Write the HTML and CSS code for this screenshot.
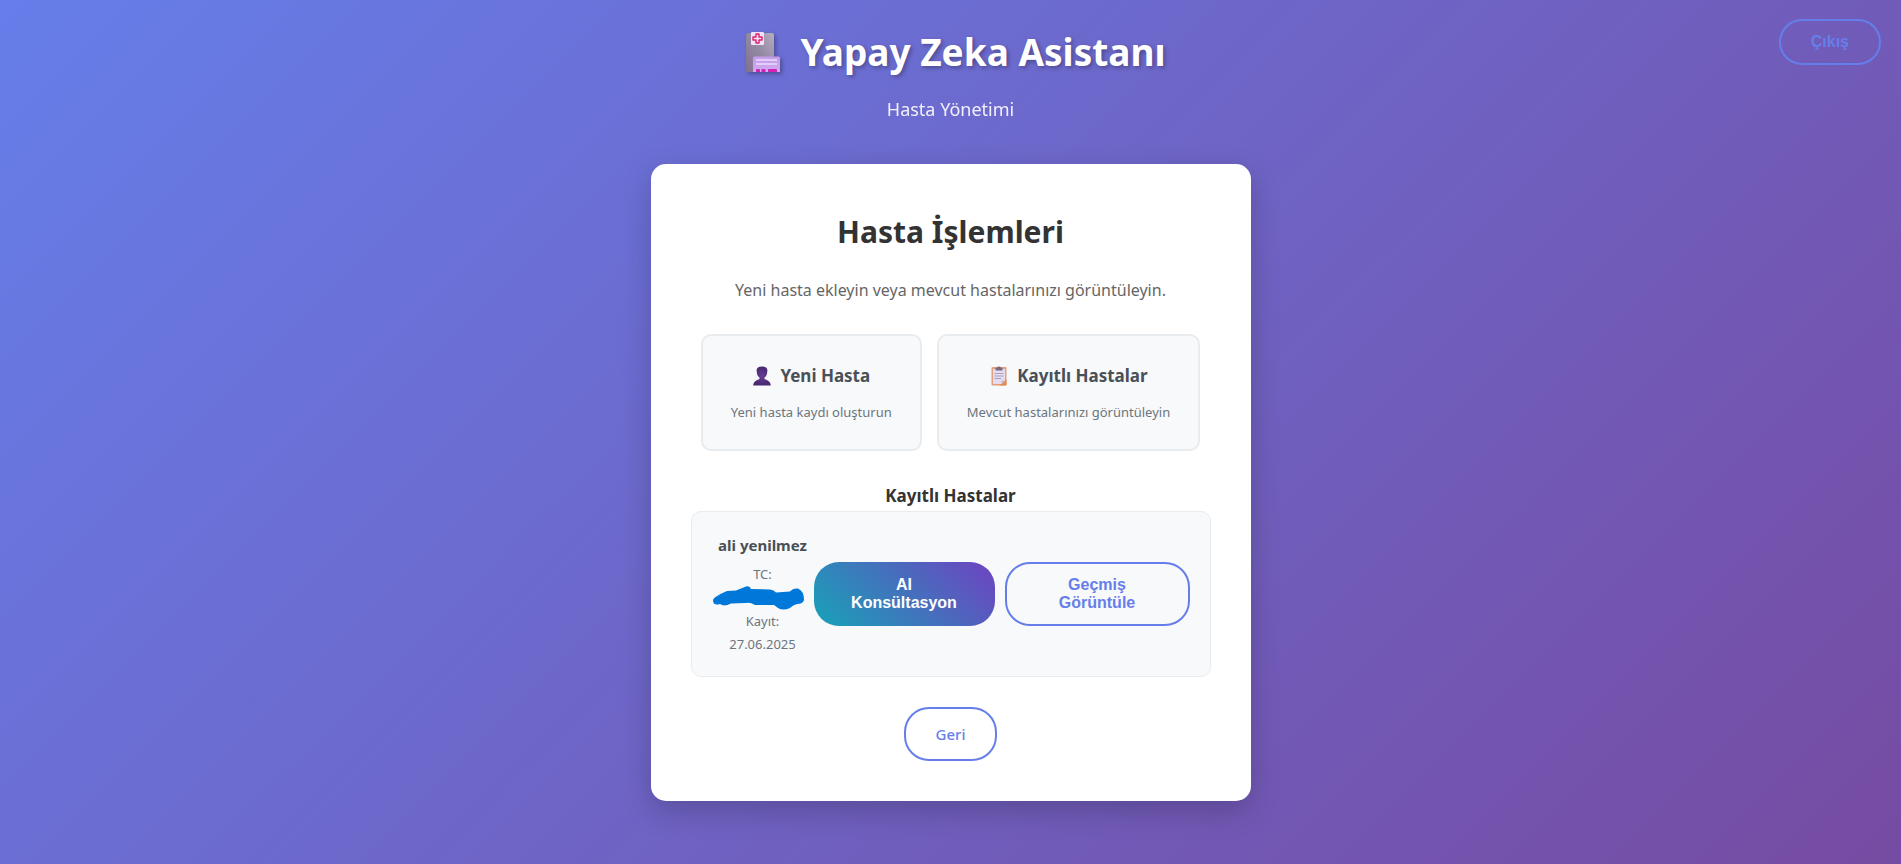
FILE: index.html
```html
<!DOCTYPE html>
<html lang="tr">
<head>
<meta charset="utf-8">
<meta name="viewport" content="width=device-width, initial-scale=1">
<title>Yapay Zeka Asistanı</title>
<link rel="stylesheet" href="styles.css">
</head>
<body>
<button type="button" class="btn btn-outline logout">Çıkış</button>
<header class="header">
  <h1 class="title">
    <svg class="title-icon" viewBox="0 0 36 42" aria-hidden="true">
      <defs>
        <linearGradient id="tower" x1="0" y1="1" x2="1" y2="0"><stop offset="0" stop-color="#80708e"/><stop offset=".5" stop-color="#9388a2"/><stop offset="1" stop-color="#b6adc0"/></linearGradient>
        <linearGradient id="wing" x1="0" y1="0" x2="0" y2="1"><stop offset="0" stop-color="#c49be8"/><stop offset="1" stop-color="#cfabf2"/></linearGradient>
      </defs>
      <path d="M1 4Q1 2 3 2H27Q29 2 29 4V41H1Z" fill="url(#tower)"/>
      <rect x="6" y="1" width="13" height="13" rx="1" fill="#eee2fb"/>
      <path d="M11 3h3v3h3v3h-3v3h-3v-3h-3v-3h3Z" fill="none" stroke="#e01f62" stroke-width="1.400" stroke-linejoin="round"/>
      <path d="M8 27Q8 25.500 9.500 25.500H33.500Q35 25.500 35 27V41H8Z" fill="url(#wing)"/>
      <path d="M11 29H32M11 33H32" stroke="#ecdcff" stroke-width="1.500"/>
      <path d="M11 41V39Q11 38 12 38H14Q15 38 15 39V41ZM16.500 41V39Q16.500 38 17.500 38H19.500Q20.500 38 20.500 39V41ZM23 41V39Q23 38 24 38H31Q32 38 32 39V41Z" fill="#d323b3"/>
    </svg>
    <span>Yapay Zeka Asistanı</span>
  </h1>
  <p class="subtitle">Hasta Yönetimi</p>
</header>
<main class="card">
  <h2 class="card-title">Hasta İşlemleri</h2>
  <p class="lead">Yeni hasta ekleyin veya mevcut hastalarınızı görüntüleyin.</p>
  <div class="options">
    <button type="button" class="option">
      <span class="option-title">
        <svg class="option-icon" viewBox="0 0 20 20" aria-hidden="true">
          <defs><radialGradient id="bust"><stop offset="0" stop-color="#653c96"/><stop offset="1" stop-color="#482870"/></radialGradient></defs>
          <path d="M10 .5C13.500.5 15.500 2 15.400 4.500L15 7.500C14.700 9.500 13.500 11 12.500 11.500V13C15.500 14 18.500 15.500 18.800 19.500H1.200C1.500 15.500 4.500 14 7.500 13V11.500C6.500 11 5.300 9.500 5 7.500L4.600 4.500C4.500 2 6.500.5 10 .5Z" fill="url(#bust)"/>
        </svg>
        <span>Yeni Hasta</span>
      </span>
      <span class="option-text">Yeni hasta kaydı oluşturun</span>
    </button>
    <button type="button" class="option">
      <span class="option-title">
        <svg class="option-icon" viewBox="0 0 20 20" aria-hidden="true">
          <rect x="2.500" y="1" width="15" height="18.500" rx="1" fill="#e3a07f"/>
          <path d="M17.500 13V18.500Q17.500 19.500 16.500 19.500H10Z" fill="#e68b50"/>
          <path d="M4 3H16V14.500L12.500 18H4Z" fill="#e5dcf2"/>
          <path d="M12.500 18V14.500H16Z" fill="#c5b5dc"/>
          <path d="M6.500 2Q6.500 1.500 8 1.500Q8.500.5 10 .5T12 1.500Q13.500 1.500 13.500 2V4.500H6.500Z" fill="#766b80"/>
          <path d="M5.500 7.500H14.500M5.500 10H14.500M5.500 12.500H12" stroke="#aaa2b6"/>
        </svg>
        <span>Kayıtlı Hastalar</span>
      </span>
      <span class="option-text">Mevcut hastalarınızı görüntüleyin</span>
    </button>
  </div>
  <section class="patients">
    <h3 class="patients-title">Kayıtlı Hastalar</h3>
    <article class="patient">
      <div class="patient-info">
        <h4 class="patient-name">ali yenilmez</h4>
        <p class="patient-meta">TC:</p>
        <svg class="redaction" viewBox="0 0 92 24" aria-hidden="true">
          <path d="M1 14C3 10 9 8 15 5L24 4.500L34 .5Q38-.5 39 3L58 3.500Q62 4 64 6.500L78 5.500Q81 2 86 2.500Q92 5 92 14Q91 18 85 18Q81 19 78 22Q71 25 66 22L62 19L43 19Q38 16 34 17L19 17.500Q12 21 8 18Q1 20 1 14Z" fill="#0078d9"/>
        </svg>
        <p class="patient-meta">Kayıt:<br>27.06.2025</p>
      </div>
      <div class="patient-actions">
        <button type="button" class="btn btn-ai">AI<br>Konsültasyon</button>
        <button type="button" class="btn btn-outline">Geçmiş<br>Görüntüle</button>
      </div>
    </article>
  </section>
  <a href="#" class="back">Geri</a>
</main>
</body>
</html>
```
FILE: styles.css
```css
* {
  box-sizing: border-box;
  margin: 0;
  padding: 0;
}

body {
  min-height: 100vh;
  padding: 20px;
  font-family: "Segoe UI", "Noto Sans", "Open Sans", sans-serif;
  color: #333;
  text-align: center;
  background: linear-gradient(135deg, #667eea 0%, #764ba2 100%);
}

.header {
  margin-bottom: 40px;
  color: #fff;
}

.title {
  display: flex;
  justify-content: center;
  align-items: center;
  gap: 19px;
  padding-left: 10px;
  font-size: 37px;
  line-height: 64px;
  text-shadow: 2px 2px 4px rgba(0, 0, 0, 0.3);
}

.title-icon {
  width: 36px;
  height: 42px;
  filter: drop-shadow(2px 2px 2px rgba(0, 0, 0, 0.3));
}

.subtitle {
  margin-top: 10px;
  font-size: 18px;
  line-height: 30px;
  opacity: 0.9;
}

.btn {
  padding: 12px 30px;
  border: 2px solid transparent;
  border-radius: 25px;
  font: bold 16px/18px "Liberation Sans", Arial, sans-serif;
  cursor: pointer;
}

.btn-outline {
  border-color: #667eea;
  color: #667eea;
  background: transparent;
}

.btn-ai {
  border: 0;
  color: #fff;
  background: linear-gradient(45deg, #17a2b8, #6f42c1);
}

.logout {
  position: absolute;
  top: 19px;
  right: 20px;
  min-height: 46px;
}

.card {
  max-width: 600px;
  margin: 0 auto;
  padding: 40px;
  border-radius: 15px;
  background: #fff;
  box-shadow: 0 10px 30px rgba(0, 0, 0, 0.2);
}

.card-title {
  font-size: 30px;
  line-height: 56px;
}

.lead {
  margin-top: 16px;
  font-size: 16px;
  line-height: 28px;
  color: #666;
}

.options {
  display: flex;
  justify-content: center;
  gap: 15px;
  margin-top: 30px;
}

.option {
  padding: 25px 28px;
  border: 2px solid #e9ecef;
  border-radius: 10px;
  font-family: inherit;
  background: #f8f9fa;
  cursor: pointer;
}

.option-title {
  display: flex;
  justify-content: center;
  align-items: center;
  gap: 8px;
  margin-bottom: 10px;
  font-size: 17px;
  font-weight: bold;
  line-height: 30px;
  color: #495057;
}

.option-icon {
  width: 20px;
  height: 20px;
}

.option-text {
  display: block;
  font-size: 13px;
  line-height: 23px;
  color: #6c757d;
}

.patients {
  margin-top: 30px;
}

.patients-title {
  font-size: 17px;
  line-height: 30px;
}

.patient {
  display: flex;
  align-items: center;
  padding: 20px;
  border: 1px solid #e9ecef;
  border-radius: 10px;
  background: #f8f9fa;
}

.patient-info {
  flex: 0 0 102px;
}

.patient-name {
  margin-bottom: 5px;
  font-size: 15px;
  line-height: 26px;
  color: #495057;
}

.patient-meta {
  font-size: 13px;
  line-height: 23px;
  color: #6c757d;
}

.redaction {
  display: block;
  width: 92px;
  height: 24px;
}

.patient-actions {
  display: flex;
  flex: 1;
  gap: 10px;
}

.patient-actions .btn {
  flex: 1;
  min-height: 64px;
}

.back {
  display: inline-block;
  margin-top: 30px;
  padding: 12px 30px;
  border: 2px solid #667eea;
  border-radius: 25px;
  font-size: 15px;
  font-weight: 500;
  line-height: 26px;
  color: #667eea;
  text-decoration: none;
}
```
